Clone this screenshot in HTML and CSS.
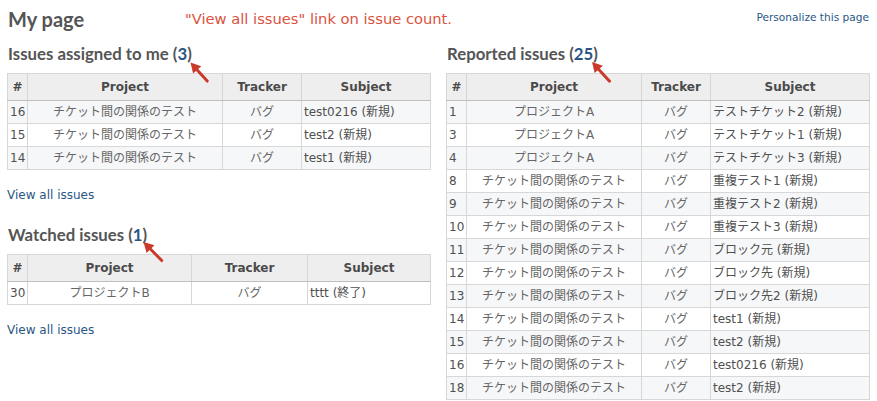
FILE: index.html
```html
<!DOCTYPE html>
<html lang="ja">
<head>
<meta charset="utf-8">
<title>My page</title>
<link rel="stylesheet" href="styles.css">
</head>
<body>
<div class="page">
  <div class="topbar">
    <h2 class="title">My page</h2>
    <span class="note">"View all issues" link on issue count.</span>
    <a class="personalize" href="#">Personalize this page</a>
  </div>
  <div class="columns">
    <div class="col">
      <h3 class="box-title">Issues assigned to me (<a href="#">3</a>)</h3>
      <table class="issues">
        <colgroup><col class="c-id"><col class="l-proj"><col class="l-track"><col class="l-subj"></colgroup>
        <thead><tr><th>#</th><th>Project</th><th>Tracker</th><th>Subject</th></tr></thead>
        <tbody>
          <tr class="odd"><td class="id">16</td><td class="proj">チケット間の関係のテスト</td><td class="track">バグ</td><td class="subj">test0216 (新規)</td></tr>
          <tr class="even"><td class="id">15</td><td class="proj">チケット間の関係のテスト</td><td class="track">バグ</td><td class="subj">test2 (新規)</td></tr>
          <tr class="odd"><td class="id">14</td><td class="proj">チケット間の関係のテスト</td><td class="track">バグ</td><td class="subj">test1 (新規)</td></tr>
        </tbody>
      </table>
      <a class="viewall" href="#">View all issues</a>

      <h3 class="box-title second">Watched issues (<a href="#">1</a>)</h3>
      <table class="issues">
        <colgroup><col class="c-id"><col class="w-proj"><col class="w-track"><col class="w-subj"></colgroup>
        <thead><tr><th>#</th><th>Project</th><th>Tracker</th><th>Subject</th></tr></thead>
        <tbody>
          <tr class="even"><td class="id">30</td><td class="proj">プロジェクトB</td><td class="track">バグ</td><td class="subj">tttt (終了)</td></tr>
        </tbody>
      </table>
      <a class="viewall" href="#">View all issues</a>
    </div>
    <div class="col">
      <h3 class="box-title">Reported issues (<a href="#">25</a>)</h3>
      <table class="issues">
        <colgroup><col class="c-id"><col class="r-proj"><col class="r-track"><col class="r-subj"></colgroup>
        <thead><tr><th>#</th><th>Project</th><th>Tracker</th><th>Subject</th></tr></thead>
        <tbody>
          <tr class="odd"><td class="id">1</td><td class="proj">プロジェクトA</td><td class="track">バグ</td><td class="subj">テストチケット2 (新規)</td></tr>
          <tr class="even"><td class="id">3</td><td class="proj">プロジェクトA</td><td class="track">バグ</td><td class="subj">テストチケット1 (新規)</td></tr>
          <tr class="odd"><td class="id">4</td><td class="proj">プロジェクトA</td><td class="track">バグ</td><td class="subj">テストチケット3 (新規)</td></tr>
          <tr class="even"><td class="id">8</td><td class="proj">チケット間の関係のテスト</td><td class="track">バグ</td><td class="subj">重複テスト1 (新規)</td></tr>
          <tr class="odd"><td class="id">9</td><td class="proj">チケット間の関係のテスト</td><td class="track">バグ</td><td class="subj">重複テスト2 (新規)</td></tr>
          <tr class="even"><td class="id">10</td><td class="proj">チケット間の関係のテスト</td><td class="track">バグ</td><td class="subj">重複テスト3 (新規)</td></tr>
          <tr class="odd"><td class="id">11</td><td class="proj">チケット間の関係のテスト</td><td class="track">バグ</td><td class="subj">ブロック元 (新規)</td></tr>
          <tr class="even"><td class="id">12</td><td class="proj">チケット間の関係のテスト</td><td class="track">バグ</td><td class="subj">ブロック先 (新規)</td></tr>
          <tr class="odd"><td class="id">13</td><td class="proj">チケット間の関係のテスト</td><td class="track">バグ</td><td class="subj">ブロック先2 (新規)</td></tr>
          <tr class="even"><td class="id">14</td><td class="proj">チケット間の関係のテスト</td><td class="track">バグ</td><td class="subj">test1 (新規)</td></tr>
          <tr class="odd"><td class="id">15</td><td class="proj">チケット間の関係のテスト</td><td class="track">バグ</td><td class="subj">test2 (新規)</td></tr>
          <tr class="even"><td class="id">16</td><td class="proj">チケット間の関係のテスト</td><td class="track">バグ</td><td class="subj">test0216 (新規)</td></tr>
          <tr class="odd"><td class="id">18</td><td class="proj">チケット間の関係のテスト</td><td class="track">バグ</td><td class="subj">test2 (新規)</td></tr>
        </tbody>
      </table>
    </div>
  </div>

  <svg class="arrows" width="877" height="401" viewBox="0 0 877 401" aria-hidden="true">
    <g class="arrow" transform="translate(190.5 62.5) rotate(48)">
      <line x1="8" y1="0" x2="25" y2="0"/>
      <polygon points="0,0 10,-5.5 10,5.5"/>
    </g>
    <g class="arrow" transform="translate(592 62) rotate(47.5)">
      <line x1="8" y1="0" x2="26" y2="0"/>
      <polygon points="0,0 10,-5.5 10,5.5"/>
    </g>
    <g class="arrow" transform="translate(143.5 242) rotate(45.5)">
      <line x1="8" y1="0" x2="26" y2="0"/>
      <polygon points="0,0 10,-5.5 10,5.5"/>
    </g>
  </svg>
</div>
</body>
</html>
```

FILE: styles.css
```css
html, body {
  margin: 0;
  padding: 0;
  background: #fff;
  overflow: hidden;
}

body {
  font-family: "DejaVu Sans", "Noto Sans CJK JP", sans-serif;
  font-size: 12px;
  color: #505050;
}

a {
  color: #2a5685;
  text-decoration: none;
}

.page {
  position: relative;
  width: 877px;
  height: 401px;
  padding: 0 8px 0 7px;
  box-sizing: border-box;
}

.topbar {
  display: flex;
  align-items: center;
  height: 38px;
}

.title {
  margin: 0;
  width: 178px;
  font-family: "Lato", "DejaVu Sans", sans-serif;
  font-weight: 700;
  font-size: 20px;
  line-height: 24px;
  color: #555;
  padding-left: 1px;
  box-sizing: border-box;
}

.note {
  font-size: 14.7px;
  color: #d9533f;
  line-height: 20px;
}

.personalize {
  margin-left: auto;
  font-size: 10.6px;
  line-height: 14px;
  margin-top: -4px;
}

.columns {
  display: flex;
  gap: 16px;
}

.col {
  width: 423px;
  display: flex;
  flex-direction: column;
  align-items: flex-start;
}

.box-title {
  margin: 6px 0 9px;
  font-family: "Lato", "DejaVu Sans", sans-serif;
  font-weight: 700;
  font-size: 16.8px;
  line-height: 20px;
  color: #555;
  padding-left: 1px;
}

.box-title.second {
  margin-top: 22px;
  margin-bottom: 9px;
}

.issues {
  width: 423px;
  table-layout: fixed;
  border-collapse: collapse;
  border: 1px solid #d7d7d7;
}

.c-id { width: 20px; }
.l-proj { width: 195px; }
.l-track { width: 79px; }
.l-subj { width: 129px; }
.w-proj { width: 164px; }
.w-track { width: 116px; }
.w-subj { width: 123px; }
.r-proj { width: 175px; }
.r-track { width: 69px; }
.r-subj { width: 159px; }

.issues th {
  background: #eeeeee;
  border: 1px solid #d7d7d7;
  border-bottom-color: #bfbfbf;
  font-weight: bold;
  font-size: 12px;
  line-height: 26px;
  height: 26px;
  padding: 0;
  color: #4a4a4a;
  text-align: center;
}

.issues td {
  border: 1px solid #d7d7d7;
  line-height: 22px;
  height: 22px;
  padding: 0 2px;
  white-space: nowrap;
  overflow: hidden;
}

.issues tr.odd td { background: #f6f7f8; }
.issues tr.even td { background: #ffffff; }

.issues td.id { text-align: left; padding-left: 2px; }
.issues td.proj { text-align: center; color: #666; }
.issues td.track { text-align: center; color: #666; }
.issues td.subj { text-align: left; }

.viewall {
  margin-top: 17px;
  line-height: 16px;
  font-size: 12px;
}

.arrows {
  position: absolute;
  left: 0;
  top: 0;
  pointer-events: none;
}

.arrow line {
  stroke: #c93a2b;
  stroke-width: 3;
  stroke-linecap: round;
}

.arrow polygon {
  fill: #c93a2b;
}
```
